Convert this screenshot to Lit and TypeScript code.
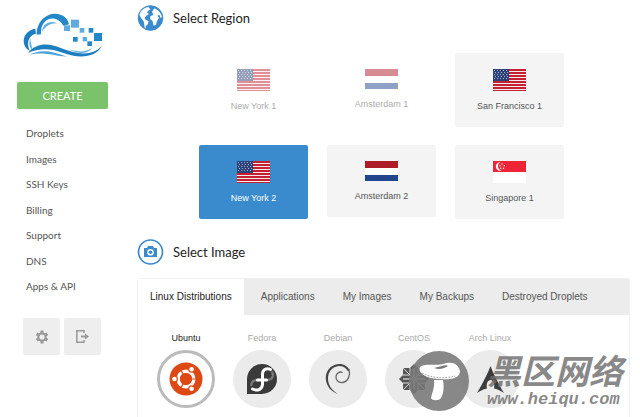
import { LitElement, html, svg, css } from "lit";
import { customElement, property, state } from "lit/decorators.js";
import { classMap } from "lit/directives/class-map.js";

const usFlag = html`<svg width="33" height="22" viewBox="0 0 33 22" aria-hidden="true">
  <rect width="33" height="22" fill="#f4e9ec" />
  ${[0, 3, 6, 9, 12, 15, 18, 21].map((y) => svg`<rect y=${y} width="33" height=${y === 21 ? 1 : 2} fill="#c4202f" />`)}
  <rect width="16" height="12" fill="#2c4278" />
  ${[1, 3, 5, 7, 9].map((y) =>
    [1, 4, 7, 10, 13].map((x) => svg`<rect x=${x + (y % 4 === 1 ? 0 : 1)} y=${y} width="1" height="1" fill="#a9b6cf" />`)
  )}
</svg>`;

const nlFlag = html`<svg width="33" height="20" viewBox="0 0 33 20" aria-hidden="true">
  <rect width="33" height="20" fill="#fff" />
  <rect width="33" height="7" fill="#ae1c28" />
  <rect y="14" width="33" height="6" fill="#21468b" />
</svg>`;

const sgFlag = html`<svg width="33" height="22" viewBox="0 0 33 22" aria-hidden="true">
  <rect width="33" height="22" fill="#fff" />
  <rect width="33" height="11" fill="#ee2536" />
  <path d="M7.500 1.200A4.300 4.300 0 1 0 8.600 9.500 A4.400 4.400 0 0 1 7.500 1.200Z" fill="#fff" />
  <g fill="#fff"><circle cx="9" cy="3" r=".7" /><circle cx="11.300" cy="4.700" r=".7" /><circle cx="7" cy="4.700" r=".7" /><circle cx="7.800" cy="7.300" r=".7" /><circle cx="10.500" cy="7.300" r=".7" /></g>
</svg>`;

const ubuntuLogo = html`<svg width="34" height="34" viewBox="0 0 34 34" aria-hidden="true">
  <circle cx="17" cy="17" r="16.500" fill="#dd4814" />
  <circle cx="17" cy="17" r="7.800" fill="none" stroke="#fff" stroke-width="3.400" />
  <g stroke="#dd4814" stroke-width="1.200"><path d="M17 17h12M17 17l-6-10.400M17 17l-6 10.400" /></g>
  <circle cx="17" cy="17" r="6" fill="#dd4814" />
  <g fill="#fff" stroke="#dd4814" stroke-width="1.200">
    <circle cx="5.500" cy="17" r="2.900" /><circle cx="22.600" cy="7.200" r="2.900" /><circle cx="22.600" cy="26.800" r="2.900" />
  </g>
</svg>`;

const fedoraLogo = html`<svg width="30" height="30" viewBox="0 0 30 30" aria-hidden="true">
  <path d="M15 0a15 15 0 1 1 0 30H0V15A15 15 0 0 1 15 0Z" fill="#3a3a3a" />
  <path d="M12 16H9a4.800 4.800 0 0 0-4.500 6M19 16h2a5 5 0 0 0 3.500-8.500" fill="none" stroke="#777" stroke-width="2.400" />
  <path d="M23.500 5.500C19 3.500 15.500 6 15.500 10v10c0 5-4.500 7.500-10 5M10.500 16h9" fill="none" stroke="#fff" stroke-width="3" stroke-linecap="round" />
</svg>`;

const debianLogo = html`<svg width="26" height="32" viewBox="0 0 26 32" aria-hidden="true">
  <path d="M24.500 7.500C23 3 18 .5 12.500 1.200 5 2.200.5 8.500.8 15.500 1.200 23 6 28.500 13 31 6.500 27 3 22 3 15.500 3 9 7 4 13 3.200c4-.5 7.800 1.300 10 5Z" fill="#444" />
  <path d="M24 6c1.500 6-.5 12.500-6.500 13.500-4 .6-7-2.500-6.500-6.300.5-3.400 3.700-5 6.600-3.700" fill="none" stroke="#666" stroke-width="1.300" />
</svg>`;

const centosLogo = html`<svg width="30" height="30" viewBox="0 0 30 30" aria-hidden="true">
  <g fill="#555"><rect x="4" y="4" width="10" height="10" /><rect x="16" y="4" width="10" height="10" /><rect x="4" y="16" width="10" height="10" /><rect x="16" y="16" width="10" height="10" />
    <path d="M15 0l4 4h-8ZM15 30l4-4h-8ZM0 15l4-4v8ZM30 15l-4-4v8Z" /></g>
  <g stroke="#ddd" stroke-width="1"><path d="M4 4l22 22M26 4L4 26M11 4v7l4 4 4-4V4M11 26v-7l4-4 4 4v7M4 11h7l4 4-4 4H4M26 11h-7l-4 4 4 4h7" fill="none" /></g>
  <path d="M15 4v22M4 15h22" stroke="#666" stroke-width="1" />
</svg>`;

const archLogo = html`<svg width="27" height="27" viewBox="0 0 27 27" aria-hidden="true">
  <path d="M13.500 0C12 4.500 6 17 0 27c4-2.500 7-4 10-4.500-1-5 .8-8.500 3.500-8.500s4.500 3.500 3.500 8.500c3 .5 6 2 10 4.500C21 17 15 4.500 13.500 0Z" fill="#3c3c3c" />
</svg>`;

interface Region { name: string; flag: unknown; available: boolean }

const regions: Region[] = [
  { name: "New York 1", flag: usFlag, available: false },
  { name: "Amsterdam 1", flag: nlFlag, available: false },
  { name: "San Francisco 1", flag: usFlag, available: true },
  { name: "New York 2", flag: usFlag, available: true },
  { name: "Amsterdam 2", flag: nlFlag, available: true },
  { name: "Singapore 1", flag: sgFlag, available: true },
];

const distributions = [
  { name: "Ubuntu", logo: ubuntuLogo },
  { name: "Fedora", logo: fedoraLogo },
  { name: "Debian", logo: debianLogo },
  { name: "CentOS", logo: centosLogo },
  { name: "Arch Linux", logo: archLogo },
];

const reset = css`
  * { box-sizing: border-box; }
  svg { display: block; flex: none; }
  button { font: inherit; color: inherit; margin: 0; padding: 0; border: 0; background: none; cursor: pointer; }
  button:disabled { cursor: default; }
`;

@customElement("side-bar")
export class SideBar extends LitElement {
  static styles = [reset, css`
    :host { display: flex; flex-direction: column; padding: 12px 0 0 17px; font-family: Lato, sans-serif; }
    .logo { margin-left: 5px; }
    .create {
      width: 91px; height: 27px; margin-top: 24px; border-radius: 2px;
      background: #7ac36a; color: #fff; font-size: 11px; line-height: 27px; text-align: center;
    }
    .links { display: flex; flex-direction: column; justify-content: space-between; height: 168px; margin: 17px 0 0 9px; padding: 0; list-style: none; }
    .links a { display: block; color: #555; font-size: 10px; line-height: 15px; text-decoration: none; }
    .tools { display: flex; gap: 4px; margin: 24px 0 0 6px; }
    .tool { display: grid; place-items: center; width: 37px; height: 37px; border-radius: 2px; background: #eee; }
  `];

  render() {
    return html`
      <svg class="logo" width="82" height="46" viewBox="66 36 246 138" role="img" aria-label="Cloud">
        <path d="M106 86C76 90 60 122 80 146L90 153C80 135 82 106 108 101Z" fill="#1d7fc0" />
        <path d="M110 104C110 62 142 38 172 42 192 45 204 57 207 73L190 77C177 53 150 50 136 64 126 73 122 86 123 103Z" fill="#2288c8" />
        <path d="M126 95C129 70 150 60 172 70 150 69 137 79 126 95Z" fill="#5eacdf" />
        <path d="M91 116C85 132 90 145 99 151 94 139 93 128 91 116Z" fill="#5eacdf" />
        <path d="M84 159C110 128 145 129 182 144 225 161 272 172 306 138 286 173 238 177 188 158 150 145 118 144 84 159Z" fill="#1d7fc0" />
        <path d="M86 165C120 147 152 151 202 170 160 168 132 154 86 165Z" fill="#4ba1da" />
        <path d="M208 148C238 158 258 156 276 144 262 164 232 163 208 148Z" fill="#5eacdf" />
        <g fill="#5eacdf"><rect x="192" y="76" width="18" height="17" /><rect x="213" y="59" width="24" height="24" /><rect x="239" y="84" width="14" height="14" /><rect x="248" y="111" width="13" height="13" /></g>
        <g fill="#2288c8"><rect x="266" y="84" width="14" height="14" /><rect x="282" y="99" width="24" height="24" /><rect x="219" y="111" width="14" height="14" /><rect x="262" y="124" width="14" height="14" /></g>
      </svg>
      <button class="create">CREATE</button>
      <nav>
        <ul class="links">
          ${["Droplets", "Images", "SSH Keys", "Billing", "Support", "DNS", "Apps & API"].map((t) => html`<li><a href="#">${t}</a></li>`)}
        </ul>
      </nav>
      <div class="tools">
        <button class="tool" aria-label="Settings">
          <svg width="12" height="14" viewBox="0 0 12 14">
            <path d="M6 .5v13M.6 3.800l10.800 6.400M.6 10.200L11.400 3.800" stroke="#999" stroke-width="3" />
            <circle cx="6" cy="7" r="4.700" fill="#999" /><circle cx="6" cy="7" r="2.600" fill="#eee" />
          </svg>
        </button>
        <button class="tool" aria-label="Log out">
          <svg width="13" height="13" viewBox="0 0 13 13">
            <path d="M8 3V.8H.8v11.400H8V10" fill="none" stroke="#999" stroke-width="1.500" />
            <path d="M5 5.500h4V3.500l4 3-4 3V7.500H5Z" fill="#999" />
          </svg>
        </button>
      </div>
    `;
  }
}

@customElement("section-title")
export class SectionTitle extends LitElement {
  @property() label = "";
  static styles = [reset, css`
    :host { display: flex; align-items: center; gap: 9px; height: 26px; }
    h2 { margin: 0; color: #222; font: 400 13px/20px Lato, sans-serif; }
  `];
  render() {
    return html`<slot></slot><h2>${this.label}</h2>`;
  }
}

@customElement("region-picker")
export class RegionPicker extends LitElement {
  @state() private selected = "New York 2";
  static styles = [reset, css`
    :host { display: grid; grid-template-columns: repeat(3, 109px); column-gap: 19px; row-gap: 18px; align-items: start; padding-left: 62px; }
    .card {
      display: flex; flex-direction: column; align-items: center; gap: 9px;
      padding: 16px 0 15px; border-radius: 2px; background: #f4f4f4; color: #555;
      font-size: 9px; line-height: 12px;
    }
    .unavailable { background: none; opacity: .5; }
    .selected { background: #3a8bce; color: #fff; }
  `];
  render() {
    return regions.map((r) => html`
      <button
        class=${classMap({ card: true, unavailable: !r.available, selected: r.name === this.selected })}
        ?disabled=${!r.available}
        aria-pressed=${r.name === this.selected}
        @click=${() => (this.selected = r.name)}
      >${r.flag}<span>${r.name}</span></button>`);
  }
}

@customElement("image-picker")
export class ImagePicker extends LitElement {
  @state() private tab = "Linux Distributions";
  @state() private selected = "Ubuntu";
  static styles = [reset, css`
    :host { display: flex; flex-direction: column; border: 1px solid #f0f0f0; border-bottom: 0; border-radius: 3px 3px 0 0; }
    .tabs { display: flex; background: #ececec; color: #555; font-size: 10px; line-height: 36px; }
    .tab { padding: 0 14px; white-space: nowrap; }
    .tab.active { padding: 0 12px; margin-right: 3px; background: #fff; color: #222; }
    .distributions { display: flex; gap: 18px; padding: 17px 19px 10px; }
    .distribution { display: flex; flex-direction: column; align-items: center; gap: 6px; width: 58px; color: #aaa; font-size: 9px; line-height: 12px; white-space: nowrap; }
    .distribution.active { color: #222; }
    .disc { display: grid; place-items: center; width: 58px; height: 58px; border-radius: 50%; background: #ebebeb; }
    .active .disc { border: 3px solid #bbb; background: #fff; }
  `];
  render() {
    return html`
      <div class="tabs" role="tablist">
        ${["Linux Distributions", "Applications", "My Images", "My Backups", "Destroyed Droplets"].map((t) => html`
          <button role="tab" class=${classMap({ tab: true, active: t === this.tab })} aria-selected=${t === this.tab} @click=${() => (this.tab = t)}>${t}</button>`)}
      </div>
      <div class="distributions">
        ${distributions.map((d) => html`
          <button class=${classMap({ distribution: true, active: d.name === this.selected })} aria-pressed=${d.name === this.selected} @click=${() => (this.selected = d.name)}>
            <span>${d.name}</span><span class="disc">${d.logo}</span>
          </button>`)}
      </div>
    `;
  }
}

@customElement("site-mark")
export class SiteMark extends LitElement {
  static styles = [reset, css`
    :host { display: flex; align-items: center; gap: 18px; pointer-events: none; color: rgba(110, 110, 110, .82); white-space: nowrap; }
    .words { display: flex; flex-direction: column; }
    .name { font: italic 700 34px/38px "Liberation Sans", "Noto Sans CJK SC", sans-serif; }
    .site { font: italic 700 17px/18px "Liberation Mono", monospace; }
  `];
  render() {
    return html`
      <svg width="60" height="60" viewBox="0 0 60 60" aria-hidden="true">
        <circle cx="30" cy="30" r="30" fill="#777" fill-opacity=".88" />
        <path d="M11 16C15 12 25 15 34 13 44 10 49 13 51 20 51 27 43 29 31 28 20 28 8 23 11 16Z" fill="#fff" />
        <path d="M25 17c5 2 9 1 14-2-1-1-4-1-6 0-3 1-5 1-8 2Z" fill="#777" />
        <path d="M13 22c9 5 22 6 33 3" fill="none" stroke="#aaa" stroke-width="1" stroke-dasharray="2 1" />
        <path d="M25 29c1 7-2 13-3 18 1 3 8 3 10 0 3-5 3-12 2-18Z" fill="#fff" />
      </svg>
      <div class="words"><span class="name">黑区网络</span><span class="site">www.heiqu.com</span></div>
    `;
  }
}

@customElement("app-root")
export class AppRoot extends LitElement {
  static styles = [reset, css`
    :host { display: grid; grid-template-columns: 137px minmax(0, 1fr); min-height: 100vh; background: #fff; font-family: "Liberation Sans", Arial, sans-serif; }
    main { display: flex; flex-direction: column; padding: 5px 10px 0 0; }
    region-picker { margin: 22px 0 20px; }
    .image { position: relative; display: flex; flex: 1; margin-top: 13px; }
    image-picker { flex: 1; }
    site-mark { position: absolute; right: 7px; top: 73px; }
  `];
  render() {
    return html`
      <side-bar></side-bar>
      <main>
        <section-title label="Select Region">
          <svg width="27" height="26" viewBox="0 0 27 26" aria-hidden="true">
            <circle cx="13.500" cy="13" r="12.300" fill="#3a8bce" stroke="#3a8bce" />
            <path d="M3 8C5 4 8 2.500 11.500 2l2 2.500-2 1-1.500 2 2 1.500-2.500 1.500-2 2.500 1 1.500 3 1.500-.5 3-2 2-1 3C7 21 7.500 18 6.500 16L4 13 2.500 10Z" fill="#fff" />
            <path d="M15 7l2-3.500C21 4 24 8 25 12l-1.500 1-1-3-2 .5L22 13l-2 3-1 4-2.500.5-1-4.500L13 14l.5-3 3-1Z" fill="#fff" />
          </svg>
        </section-title>
        <region-picker></region-picker>
        <section-title label="Select Image">
          <svg width="27" height="26" viewBox="0 0 27 26" aria-hidden="true">
            <circle cx="13.500" cy="13" r="12" fill="#fff" stroke="#3a8bce" stroke-width="1.700" />
            <path d="M7 9h3l1-2h5l1 2h3v9H7Z" fill="#3a8bce" />
            <circle cx="13.500" cy="13.300" r="3.300" fill="#fff" /><circle cx="13.500" cy="13.300" r="1.800" fill="#3a8bce" />
          </svg>
        </section-title>
        <div class="image">
          <image-picker></image-picker>
          <site-mark></site-mark>
        </div>
      </main>
    `;
  }
}
